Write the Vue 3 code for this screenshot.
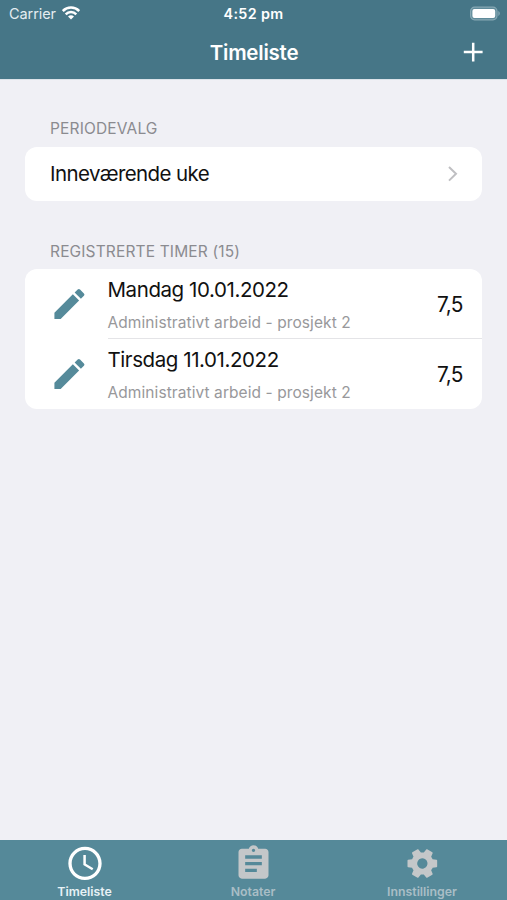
<script setup>
const entries = [
  { id: 1, date: 'Mandag 10.01.2022', note: 'Administrativt arbeid - prosjekt 2', hours: '7,5' },
  { id: 2, date: 'Tirsdag 11.01.2022', note: 'Administrativt arbeid - prosjekt 2', hours: '7,5' },
]
</script>

<template>
  <div class="screen">
    <header class="header">
      <div class="status">
        <div class="carrier">
          <span class="carrier-name">Carrier</span>
          <svg class="wifi" viewBox="0 0 18 14" width="18" height="14">
            <g fill="none" stroke="#fff" stroke-width="2.5">
              <path d="M.8 5a11.6 11.6 0 0 1 16.4 0" />
              <path d="M3.7 8.3a7.5 7.5 0 0 1 10.6 0" />
            </g>
            <path d="M9 13.6 6 10.6a4.3 4.3 0 0 1 6 0z" fill="#fff" />
          </svg>
        </div>
        <span class="clock">4:52 pm</span>
        <div class="power">
          <svg viewBox="0 0 32 16" width="32" height="16">
            <rect x="1.6" y="1.2" width="26.4" height="12.6" rx="4" fill="#5f8b9a" stroke="#86a8b4" stroke-width="1.2" />
            <rect x="3.4" y="3.1" width="22.8" height="8.8" rx="2" fill="#fff" />
            <path d="M29.3 5.1c2 .7 2 4.1 0 4.8z" fill="#86a8b4" />
          </svg>
        </div>
      </div>
      <div class="nav">
        <h1 class="title">Timeliste</h1>
        <svg class="add" viewBox="0 0 20 20" width="20" height="20">
          <path d="M10.2 .7v18.8M.8 10h18.8" stroke="#fff" stroke-width="2.5" />
        </svg>
      </div>
    </header>

    <main class="content">
      <h2 class="label period-label"><span>PERIODEVALG</span></h2>
      <div class="card period">
        <span class="period-name">Inneværende uke</span>
        <svg viewBox="0 0 10 16" width="10" height="16">
          <path d="M1 1 8 7.8l-7 6.8" fill="none" stroke="#bfbfc2" stroke-width="2" />
        </svg>
      </div>
      <h2 class="label list-label"><span>REGISTRERTE TIMER (15)</span></h2>
      <div class="card">
        <div v-for="entry in entries" :key="entry.id" class="entry">
          <svg class="pencil" viewBox="-0.25 0 24 24" width="40" height="40">
            <path fill="#558a9a" d="M3 17.25V21h3.75L17.81 9.94l-3.75-3.75L3 17.25zM20.71 7.04a1 1 0 0 0 0-1.41l-2.34-2.34a1 1 0 0 0-1.41 0l-1.83 1.83 3.75 3.75 1.83-1.83z" />
          </svg>
          <div class="body">
            <div class="texts">
              <div class="date"><span>{{ entry.date }}</span></div>
              <div class="note"><span>{{ entry.note }}</span></div>
            </div>
            <span class="hours">{{ entry.hours }}</span>
          </div>
        </div>
      </div>
    </main>

    <nav class="tabs">
      <div class="tab active">
        <svg viewBox="0 -0.25 24 24" width="40" height="40">
          <path fill="currentColor" d="M11.99 2C6.47 2 2 6.48 2 12s4.47 10 9.99 10C17.52 22 22 17.52 22 12S17.52 2 11.99 2zM12 20c-4.42 0-8-3.58-8-8s3.58-8 8-8 8 3.58 8 8-3.58 8-8 8zM12.5 7H11v6l5.25 3.15.75-1.23-4.5-2.67z" />
        </svg>
        <span class="tab-name">Timeliste</span>
      </div>
      <div class="tab">
        <svg viewBox="-0.3 -0.4 24 24" width="40" height="40">
          <path fill="currentColor" d="M19 3h-4.18C14.4 1.84 13.3 1 12 1c-1.3 0-2.4.84-2.82 2H5c-1.1 0-2 .9-2 2v14c0 1.1.9 2 2 2h14c1.1 0 2-.9 2-2V5c0-1.1-.9-2-2-2zm-7 0c.55 0 1 .45 1 1s-.45 1-1 1-1-.45-1-1 .45-1 1-1zm2 14H7v-2h7v2zm3-4H7v-2h10v2zm0-4H7V7h10v2z" />
        </svg>
        <span class="tab-name">Notater</span>
      </div>
      <div class="tab">
        <svg viewBox="-0.2 -0.3 24 24" width="40" height="40">
          <g transform="translate(12 12) scale(.89 .88) translate(-12 -12)">
            <path fill="currentColor" d="M19.43 12.98c.04-.32.07-.64.07-.98s-.03-.66-.07-.98l2.11-1.65c.19-.15.24-.42.12-.64l-2-3.46c-.12-.22-.39-.3-.61-.22l-2.49 1c-.52-.4-1.08-.73-1.69-.98l-.38-2.65C14.46 2.18 14.25 2 14 2h-4c-.25 0-.46.18-.49.42l-.38 2.65c-.61.25-1.17.59-1.69.98l-2.49-1c-.23-.09-.49 0-.61.22l-2 3.46c-.13.22-.07.49.12.64l2.11 1.65c-.04.32-.07.65-.07.98s.03.66.07.98l-2.11 1.65c-.19.15-.24.42-.12.64l2 3.46c.12.22.39.3.61.22l2.49-1c.52.4 1.08.73 1.69.98l.38 2.65c.03.24.24.42.49.42h4c.25 0 .46-.18.49-.42l.38-2.65c.61-.25 1.17-.59 1.69-.98l2.49 1c.23.09.49 0 .61-.22l2-3.46c.12-.22.07-.49-.12-.64l-2.11-1.65zM12 15.5a3.5 3.5 0 1 1 0-7 3.5 3.5 0 0 1 0 7z" transform="rotate(30 12 12)" />
          </g>
        </svg>
        <span class="tab-name">Innstillinger</span>
      </div>
    </nav>
  </div>
</template>

<style>
body {
  margin: 0;
}
</style>

<style scoped>
.screen {
  display: flex;
  flex-direction: column;
  width: 507px;
  height: 900px;
  overflow: hidden;
  background: #f0f0f5;
  font-family: Inter, "Liberation Sans", sans-serif;
  color: #111;
}
.header {
  height: 79px;
  flex: none;
  background: #467687;
  color: #fff;
  box-shadow: 0 1px #dbe3e9;
}
.status {
  display: grid;
  grid-template-columns: 1fr auto 1fr;
  height: 27px;
  align-items: center;
  padding: 0 6px 0 9px;
}
.carrier {
  display: flex;
  align-items: center;
  gap: 6.5px;
  color: #e4edf1;
}
.carrier-name {
  font-size: 14.5px;
  line-height: 18px;
  letter-spacing: -0.08px;
}
.wifi {
  margin-top: -2px;
}
.clock {
  margin-left: -3px;
  font-size: 14.3px;
  font-weight: 600;
  line-height: 18px;
  letter-spacing: 0.36px;
}
.power {
  display: flex;
  justify-content: flex-end;
}
.nav {
  display: grid;
  grid-template-columns: 1fr auto 1fr;
  align-items: center;
  height: 50px;
  padding: 0 24px 0 25px;
}
.title {
  grid-column: 2;
  margin: 0;
  padding-top: 2px;
  font-size: 20.5px;
  line-height: 26px;
  font-weight: 600;
  letter-spacing: -0.22px;
}
.add {
  justify-self: end;
}
.content {
  flex: 1;
  padding: 0 25px;
}
.label {
  margin: 0;
  padding-left: 25px;
  font-size: 15.5px;
  line-height: 20px;
  font-weight: 400;
  letter-spacing: 0.15px;
  color: #8b8b90;
}
.period-label {
  padding-top: 40px;
  padding-bottom: 7.5px;
}
.list-label {
  padding-top: 41px;
  padding-bottom: 7px;
}
.card {
  background: #fff;
  border-radius: 12px;
}
.period {
  display: flex;
  align-items: center;
  justify-content: space-between;
  height: 54px;
  padding: 0 24px 0 25px;
}
.period-name {
  font-size: 20.5px;
  letter-spacing: -0.6px;
}
.entry {
  display: flex;
  height: 70px;
  padding-left: 24px;
}
.pencil {
  flex: none;
  margin: 15px 18.5px 0 0;
}
.body {
  flex: 1;
  display: flex;
  justify-content: space-between;
  align-items: center;
  padding-right: 19px;
  box-sizing: border-box;
}
.entry:not(:last-child) .body {
  box-shadow: inset 0 -1px #e4e4e7;
}
.texts {
  display: flex;
  flex-direction: column;
  gap: 10px;
  padding-top: 2px;
}
.date {
  font-size: 20.5px;
  line-height: 26px;
  letter-spacing: -0.42px;
}
.note {
  font-size: 15.5px;
  line-height: 20px;
  letter-spacing: 0.08px;
  color: #98989b;
}
.hours {
  padding-top: 2px;
  font-size: 20.8px;
  letter-spacing: -0.5px;
}
.tabs {
  display: grid;
  grid-template-columns: repeat(3, 1fr);
  height: 60px;
  flex: none;
  background: #558999;
}
.tab {
  display: flex;
  flex-direction: column;
  align-items: center;
  padding-top: 3px;
  padding-right: 1px;
  color: #c4c7c9;
}
.tab.active {
  padding-right: 0;
  color: #fff;
}
.tab-name {
  padding-top: 1px;
  font-size: 12.3px;
  line-height: 15px;
  font-weight: 600;
  color: #a9bec6;
}
.active .tab-name {
  color: #e8f2f6;
}
</style>
